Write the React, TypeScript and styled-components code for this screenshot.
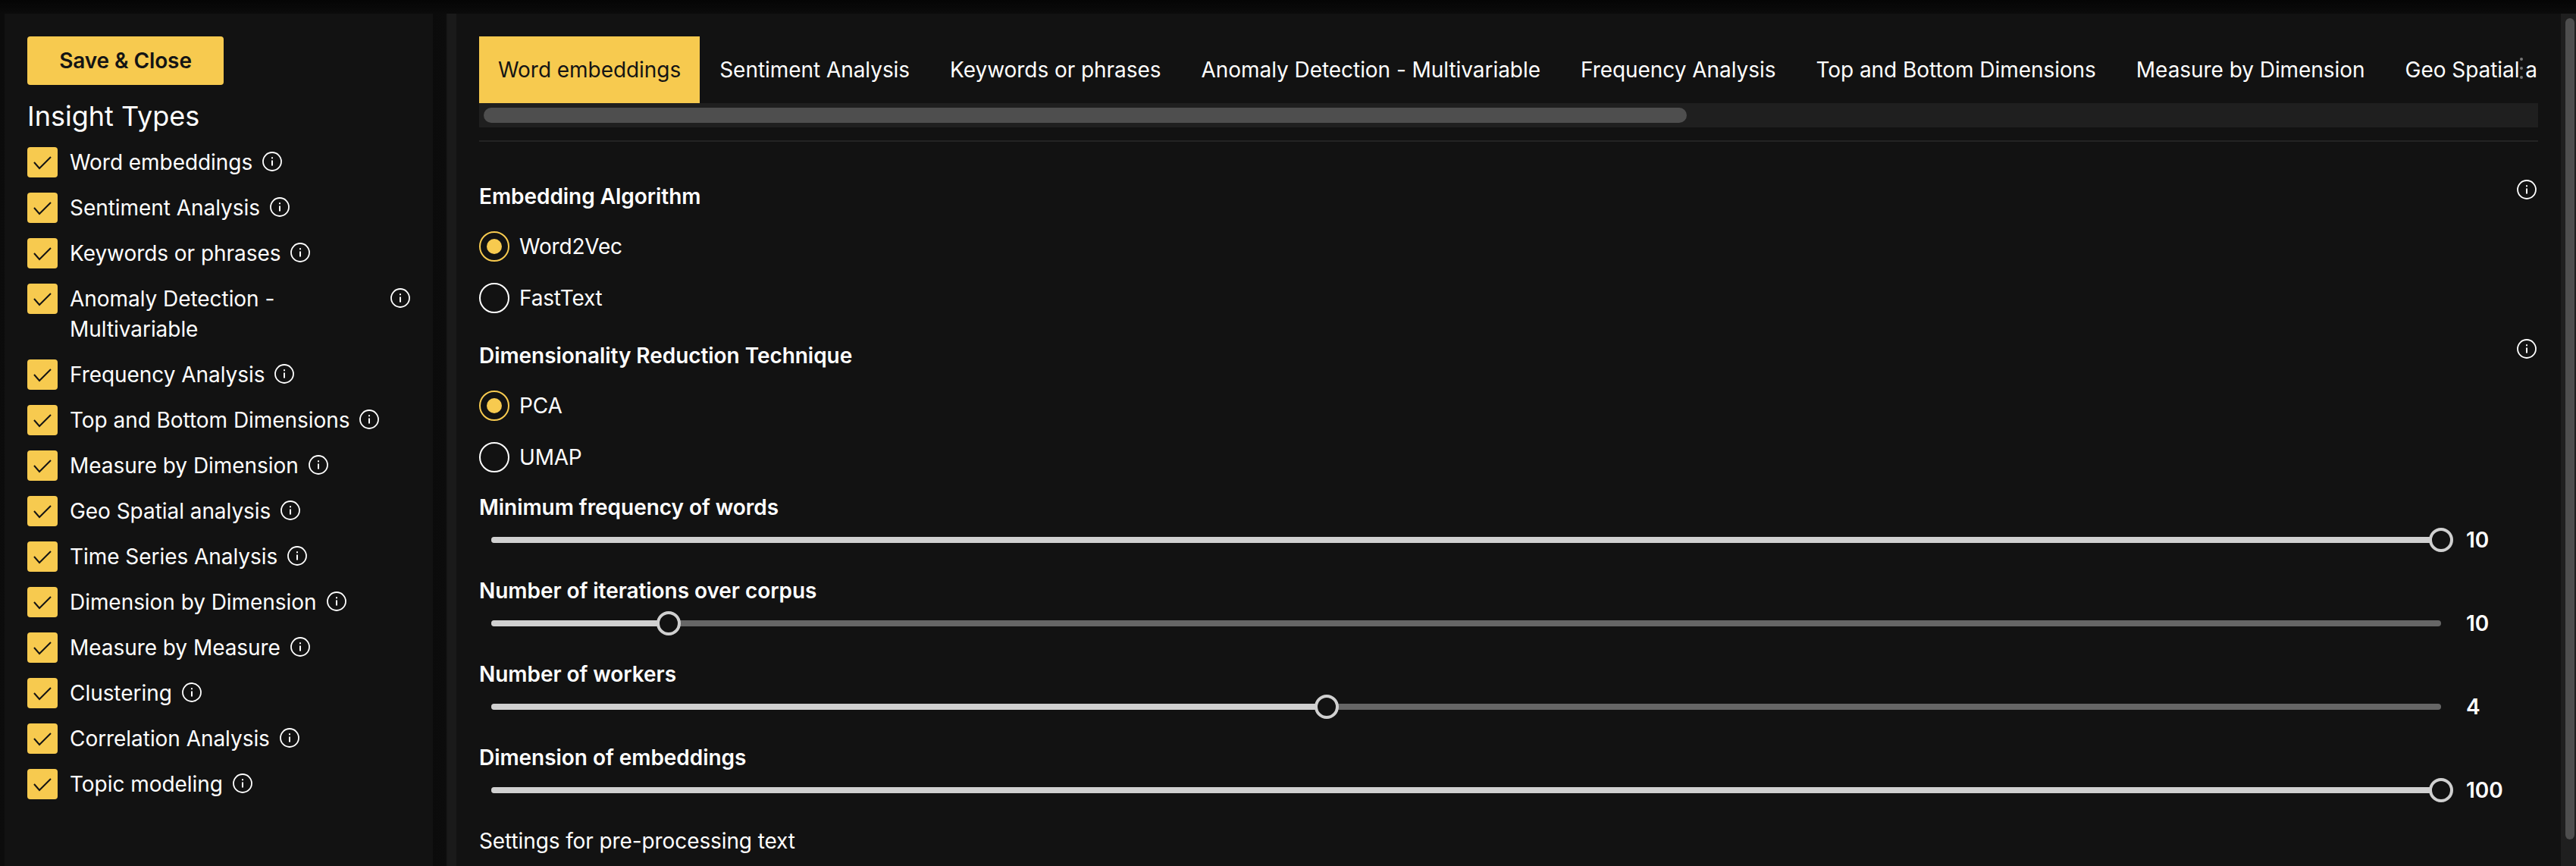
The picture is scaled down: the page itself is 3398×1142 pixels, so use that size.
import React from "react";
import styled, { createGlobalStyle } from "styled-components";

const GlobalStyle = createGlobalStyle`
  html, body {
    margin: 0;
    padding: 0;
    height: 100%;
    background: #0a0a0a;
  }
  body {
    font-family: Inter, "Liberation Sans", sans-serif;
    color: #ffffff;
    overflow: hidden;
  }
`;

const Page = styled.div`
  display: flex;
  height: 1142px;
  padding-top: 18px;
  padding-left: 6px;
  box-sizing: border-box;
  background: linear-gradient(180deg, #050505 0, #0b0b0b 18px, #0c0c0c 100%);
`;

const Sidebar = styled.aside`
  width: 565px;
  flex: none;
  background: #121212;
  box-sizing: border-box;
  padding: 30px 30px 0 30px;
`;

const Gutter = styled.div`
  flex: none;
  width: 31px;
  background: linear-gradient(90deg, #0b0b0b 0, #0c0c0c 55%, #1a1a1a 62%, #1a1a1a 100%);
`;

const SaveButton = styled.button`
  display: block;
  width: 259px;
  height: 64px;
  padding: 0;
  border: none;
  border-radius: 4px;
  background: #f7ca4f;
  color: #141414;
  font: 600 28px Inter, sans-serif;
  letter-spacing: -0.1px;
  cursor: pointer;
`;

const SideTitle = styled.h2`
  margin: 16px 0 0;
  font-size: 36px;
  line-height: 50px;
  font-weight: 400;
`;

const CheckList = styled.ul`
  list-style: none;
  margin: 16px 0 0;
  padding: 0;
  display: flex;
  flex-direction: column;
  gap: 20px;
`;

const CheckRow = styled.li`
  display: flex;
  align-items: flex-start;
  gap: 17px;
`;

const CheckBox = styled.span`
  width: 40px;
  height: 40px;
  flex: none;
  border-radius: 4px;
  background: #f7ca4f;
  display: flex;
  align-items: center;
  justify-content: center;
`;

const CheckText = styled.span<{ $wide?: boolean }>`
  font-size: 28px;
  line-height: 40px;
  letter-spacing: -0.05px;
  margin-left: -1px;
  ${(p) => (p.$wide ? "width: 416px;" : "")}
`;

const InfoWrap = styled.span`
  display: flex;
  flex: none;
  margin: 6px 0 0 -4px;
`;

const Main = styled.main`
  flex: none;
  width: 2776px;
  background: #121212;
  box-sizing: border-box;
  padding: 30px 30px 0 30px;
`;

const TabStrip = styled.div`
  position: relative;
  display: flex;
  overflow: hidden;
  height: 88px;
`;

const Tab = styled.div<{ $active?: boolean }>`
  flex: none;
  padding: ${(p) => (p.$active ? "0 24.5px 0 25px" : "0 26.5px")};
  display: flex;
  align-items: center;
  font-size: 28px;
  letter-spacing: -0.05px;
  white-space: nowrap;
  background: ${(p) => (p.$active ? "#f7ca4f" : "transparent")};
  color: ${(p) => (p.$active ? "#141414" : "#ffffff")};
`;

const ResizeDots = styled.span`
  position: absolute;
  left: 2692px;
  top: 28px;
  display: flex;
  flex-direction: column;
  gap: 8px;

  i {
    width: 4px;
    height: 4px;
    border-radius: 50%;
    background: #787878;
  }
`;

const TabScroll = styled.div`
  height: 32px;
  background: #1f1f1f;
  padding: 6px;
  box-sizing: border-box;
`;

const TabThumb = styled.div`
  width: 1587px;
  height: 20px;
  border-radius: 10px;
  background: #4e4e4e;
`;

const Divider = styled.hr`
  margin: 17px 0 52px;
  border: none;
  height: 2px;
  background: #242424;
`;

const Group = styled.section`
  display: flex;
  flex-direction: column;

  & + & {
    margin-top: 36px;
  }
`;

const GroupHead = styled.div`
  display: flex;
  justify-content: space-between;
  align-items: flex-start;
  height: 40px;

  svg {
    margin: -2px 2px 0 0;
  }
`;

const FieldLabel = styled.div`
  font-size: 28px;
  line-height: 40px;
  font-weight: 600;
  letter-spacing: -0.05px;
`;

const RadioRow = styled.label`
  display: flex;
  align-items: center;
  gap: 13px;
  height: 40px;
  margin-top: 28px;
  font-size: 28px;
  letter-spacing: -0.2px;

  ${GroupHead} + & {
    margin-top: 26px;
  }
`;

const Radio = styled.span<{ $on?: boolean }>`
  width: 40px;
  height: 40px;
  box-sizing: border-box;
  border-radius: 50%;
  border: 2px solid ${(p) => (p.$on ? "#f7ca4f" : "#ffffff")};
  display: flex;
  align-items: center;
  justify-content: center;

  &::after {
    content: "";
    display: ${(p) => (p.$on ? "block" : "none")};
    width: 20px;
    height: 20px;
    border-radius: 50%;
    background: #f7ca4f;
  }
`;

const SliderField = styled.div`
  display: flex;
  flex-direction: column;
  margin-top: 31px;

  ${Group} + & {
    margin-top: 26px;
  }
`;

const SliderRow = styled.div`
  display: flex;
  align-items: center;
  height: 32px;
  margin-top: 7px;
  padding-left: 16px;
`;

const Track = styled.div`
  position: relative;
  width: 2572px;
  height: 8px;
  border-radius: 4px;
  background: #666666;
`;

const TrackFill = styled.div`
  height: 100%;
  border-radius: 4px;
  background: #d0d0d0;
`;

const Thumb = styled.span`
  position: absolute;
  top: -12px;
  width: 32px;
  height: 32px;
  margin-left: -16px;
  box-sizing: border-box;
  border-radius: 50%;
  border: 4px solid #d0d0d0;
  background: #121212;
`;

const SliderValue = styled.span`
  margin-left: 33px;
  font-size: 28px;
  font-weight: 600;
`;

const SectionNote = styled.div`
  margin-top: 31px;
  font-size: 28px;
  line-height: 40px;
  letter-spacing: -0.1px;
`;

const ScrollRail = styled.div`
  flex: none;
  width: 20px;
  background: #1f1f1f;
  box-sizing: border-box;
  padding: 6px 2px 0 6px;
`;

const ScrollThumb = styled.div`
  height: 1083px;
  border-radius: 6px;
  background: #4e4e4e;
`;

const InfoIcon = () => (
  <svg width="26" height="26" viewBox="0 0 26 26" fill="none" stroke="#fff">
    <circle cx="13" cy="13" r="12" strokeWidth="1.8" />
    <path d="M13 11.5v7" strokeWidth="2" />
    <path d="M13 7.2v2" strokeWidth="2" />
  </svg>
);

const insightTypes = [
  "Word embeddings",
  "Sentiment Analysis",
  "Keywords or phrases",
  "Anomaly Detection - Multivariable",
  "Frequency Analysis",
  "Top and Bottom Dimensions",
  "Measure by Dimension",
  "Geo Spatial analysis",
  "Time Series Analysis",
  "Dimension by Dimension",
  "Measure by Measure",
  "Clustering",
  "Correlation Analysis",
  "Topic modeling",
];

const sliders = [
  { label: "Minimum frequency of words", value: 10, percent: 100 },
  { label: "Number of iterations over corpus", value: 10, percent: 9.09 },
  { label: "Number of workers", value: 4, percent: 42.86 },
  { label: "Dimension of embeddings", value: 100, percent: 100 },
];

const App = () => {
  return (
    <>
      <GlobalStyle />
      <Page>
        <Sidebar>
          <SaveButton>Save &amp; Close</SaveButton>
          <SideTitle>Insight Types</SideTitle>
          <CheckList>
            {insightTypes.map((name) => (
              <CheckRow key={name}>
                <CheckBox>
                  <svg width="24" height="24" viewBox="0 0 24 24" fill="none" stroke="#141414" strokeWidth="2">
                    <path d="M1 12l7 8L23 5" />
                  </svg>
                </CheckBox>
                <CheckText $wide={name.startsWith("Anomaly")}>{name}</CheckText>
                <InfoWrap>
                  <InfoIcon />
                </InfoWrap>
              </CheckRow>
            ))}
          </CheckList>
        </Sidebar>
        <Gutter />
        <Main>
          <TabStrip>
            {insightTypes.map((name, i) => (
              <Tab key={name} $active={i === 0}>
                {name}
              </Tab>
            ))}
            <ResizeDots>
              <i />
              <i />
              <i />
            </ResizeDots>
          </TabStrip>
          <TabScroll>
            <TabThumb />
          </TabScroll>
          <Divider />
          <Group>
            <GroupHead>
              <FieldLabel>Embedding Algorithm</FieldLabel>
              <InfoIcon />
            </GroupHead>
            <RadioRow>
              <Radio $on />
              Word2Vec
            </RadioRow>
            <RadioRow>
              <Radio />
              FastText
            </RadioRow>
          </Group>
          <Group>
            <GroupHead>
              <FieldLabel>Dimensionality Reduction Technique</FieldLabel>
              <InfoIcon />
            </GroupHead>
            <RadioRow>
              <Radio $on />
              PCA
            </RadioRow>
            <RadioRow>
              <Radio />
              UMAP
            </RadioRow>
          </Group>
          {sliders.map((s) => (
            <SliderField key={s.label}>
              <FieldLabel>{s.label}</FieldLabel>
              <SliderRow>
                <Track>
                  <TrackFill style={{ width: `${s.percent}%` }} />
                  <Thumb style={{ left: `${s.percent}%` }} />
                </Track>
                <SliderValue>{s.value}</SliderValue>
              </SliderRow>
            </SliderField>
          ))}
          <SectionNote>Settings for pre-processing text</SectionNote>
        </Main>
        <ScrollRail>
          <ScrollThumb />
        </ScrollRail>
      </Page>
    </>
  );
};

export default App;
